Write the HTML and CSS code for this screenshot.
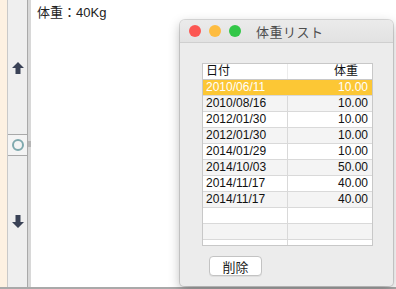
FILE: index.html
```html
<!DOCTYPE html>
<html lang="ja">
<head>
<meta charset="UTF-8">
<title>体重リスト</title>
<link rel="stylesheet" href="styles.css">
</head>
<body>
    <div class="page">
        <div class="edge"></div>
        <div class="scroller">
            <div class="scroll-part">
                <svg class="arrow" width="12" height="12" viewBox="0 0 12 12">
                    <path d="M6 0 L12 6 L8.5 6 L8.5 12 L3.5 12 L3.5 6 L0 6 Z" fill="#3a4256"/>
                </svg>
            </div>
            <div class="thumb"><span class="ring"></span></div>
            <div class="scroll-part">
                <svg class="arrow" width="12" height="13" viewBox="0 0 12 13">
                    <path d="M3.5 0 L8.5 0 L8.5 7 L12 7 L6 13 L0 7 L3.5 7 Z" fill="#3a4256"/>
                </svg>
            </div>
        </div>
        <div class="rail"><span class="nub"></span></div>
        <div class="content">
            <p class="weight">体重：40Kg</p>
        </div>
    </div>

    <div class="window">
        <div class="titlebar">
            <span class="light red"></span>
            <span class="light yellow"></span>
            <span class="light green"></span>
            <span class="title">体重リスト</span>
        </div>
        <div class="window-body">
            <div class="list">
                <div class="row head">
                    <div class="cell">日付</div>
                    <div class="cell num">体重</div>
                </div>
                <div class="row selected"><div class="cell">2010/06/11</div><div class="cell num">10.00</div></div>
                <div class="row"><div class="cell">2010/08/16</div><div class="cell num">10.00</div></div>
                <div class="row"><div class="cell">2012/01/30</div><div class="cell num">10.00</div></div>
                <div class="row"><div class="cell">2012/01/30</div><div class="cell num">10.00</div></div>
                <div class="row"><div class="cell">2014/01/29</div><div class="cell num">10.00</div></div>
                <div class="row"><div class="cell">2014/10/03</div><div class="cell num">50.00</div></div>
                <div class="row"><div class="cell">2014/11/17</div><div class="cell num">40.00</div></div>
                <div class="row"><div class="cell">2014/11/17</div><div class="cell num">40.00</div></div>
                <div class="row"><div class="cell"></div><div class="cell num"></div></div>
                <div class="row"><div class="cell"></div><div class="cell num"></div></div>
                <div class="row"><div class="cell"></div><div class="cell num"></div></div>
            </div>
            <button class="delete">削除</button>
        </div>
    </div>
</body>
</html>
```

FILE: styles.css
```css
body {
    margin: 0;
    font-family: "Liberation Sans", "Noto Sans CJK JP", sans-serif;
    background: #fff;
    overflow: hidden;
}

.page {
    display: flex;
    height: 287px;
    border-bottom: 2px solid #a9a9a9;
}

.edge {
    width: 7px;
    background: #fdf1e2;
}

.scroller {
    width: 19px;
    display: flex;
    flex-direction: column;
    background: #efefef;
    border-left: 1px solid #c9c9c9;
    border-right: 1px solid #a9a9a9;
}

.scroll-part {
    flex: 1;
    display: flex;
    align-items: center;
    justify-content: center;
}

.scroller .scroll-part:first-child {
    height: 134px;
    flex: none;
    padding-top: 2px;
    box-sizing: border-box;
}

.thumb {
    height: 20px;
    display: flex;
    align-items: center;
    justify-content: center;
    border-top: 1px solid #a9a9a9;
    border-bottom: 1px solid #a9a9a9;
    background: #f4f4f4;
}

.ring {
    width: 8px;
    height: 8px;
    border: 2px solid #7fa9ae;
    border-radius: 50%;
}

.rail {
    width: 3px;
    background: #d8d8d8;
    position: relative;
}

.rail .nub {
    position: absolute;
    left: 0;
    top: 141px;
    width: 3px;
    height: 6px;
    background: #b5b5b5;
}

.content {
    flex: 1;
    padding-left: 6px;
}

.weight {
    margin: 2px 0 0;
    font-size: 13px;
    color: #222;
}

.window {
    position: absolute;
    left: 180px;
    top: 20px;
    width: 213px;
    height: 266px;
    background: #ececec;
    border-radius: 5px 5px 4px 4px;
    box-shadow: 0 0 0 1px rgba(0, 0, 0, 0.13), 0 4px 12px rgba(0, 0, 0, 0.28);
    overflow: hidden;
}

.titlebar {
    height: 22px;
    display: flex;
    align-items: center;
    padding-left: 9px;
    gap: 8px;
    background: linear-gradient(#ebebeb, #e2e2e2);
    border-bottom: 1px solid #cfcfcf;
}

.light {
    width: 12px;
    height: 12px;
    border-radius: 50%;
}

.red { background: #fc5753; }
.yellow { background: #fdbc40; }
.green { background: #33c748; }

.title {
    margin-left: 7px;
    font-size: 13px;
    color: #4d4d4d;
    letter-spacing: 0.5px;
}

.window-body {
    padding: 20px 20px 0 22px;
}

.list {
    height: 181px;
    overflow: hidden;
    border: 1px solid #c8c8c8;
    background: #fff;
}

.row {
    display: flex;
    height: 15px;
    border-bottom: 1px solid #d9d9d9;
    font-size: 12px;
    line-height: 15px;
    color: #111;
}

.row:nth-child(odd) {
    background: #f4f4f4;
}

.row .cell {
    box-sizing: border-box;
    width: 85px;
    padding: 0 3px;
    border-right: 1px solid #d9d9d9;
}

.row .cell.num {
    flex: 1;
    text-align: right;
    border-right: none;
    padding-right: 4px;
}

.row.head {
    background: #fff;
    border-bottom: 1px solid #c8c8c8;
}

.row.head .cell {
    border-right-color: #ececec;
}

.row.head .cell.num {
    padding-right: 14px;
}

.row.selected {
    background: #fcc735;
    color: #fff;
}

.row.selected .cell {
    border-right-color: #fcc735;
}

.delete {
    margin: 10px 0 0 7px;
    width: 53px;
    height: 20px;
    padding: 0;
    font-family: "Liberation Sans", "Noto Sans CJK JP", sans-serif;
    font-size: 13px;
    color: #222;
    background: #fff;
    border: 1px solid #c3c3c3;
    border-radius: 4px;
    box-shadow: 0 1px 0 rgba(0, 0, 0, 0.06);
}
```
